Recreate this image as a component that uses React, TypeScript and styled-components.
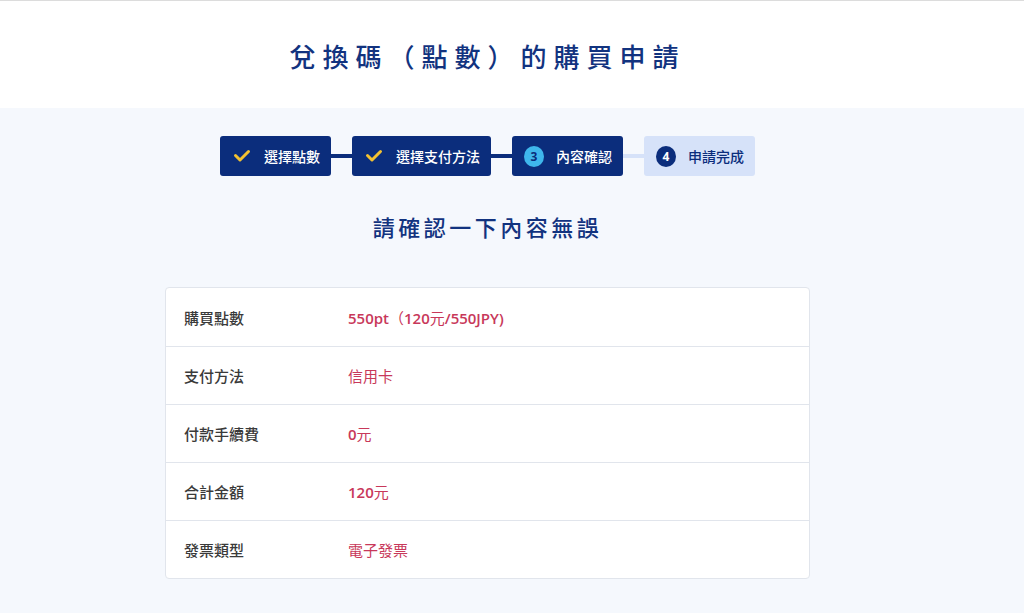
import styled, { createGlobalStyle } from "styled-components";

const GlobalStyle = createGlobalStyle`
  html, body {
    margin: 0;
    padding: 0;
    background: #f5f8fd;
    font-family: "Noto Sans CJK TC", "Noto Sans", sans-serif;
  }
  * { box-sizing: border-box; }
`;

const NAVY = "#0b2d7c";
const PALE = "#d6e2f9";

type StepState = "done" | "current" | "todo";

const steps: { label: string; state: StepState; num: number }[] = [
  { label: "選擇點數", state: "done", num: 1 },
  { label: "選擇支付方法", state: "done", num: 2 },
  { label: "內容確認", state: "current", num: 3 },
  { label: "申請完成", state: "todo", num: 4 },
];

const rows = [
  { label: "購買點數", value: "550pt（120元/550JPY)" },
  { label: "支付方法", value: "信用卡" },
  { label: "付款手續費", value: "0元" },
  { label: "合計金額", value: "120元" },
  { label: "發票類型", value: "電子發票" },
];

const CheckIcon = () => (
  <svg width="20" height="20" viewBox="0 0 20 20">
    <polyline
      points="3.5,9.5 8,14 16.5,5.5"
      fill="none"
      stroke="#f3c131"
      strokeWidth="3"
      strokeLinecap="round"
      strokeLinejoin="round"
    />
  </svg>
);

// latin runs are semibold in the design, han characters stay regular
const renderValue = (text: string) =>
  text
    .split(/([\x20-\x7E]+)/)
    .filter(Boolean)
    .map((part, i) =>
      /^[\x20-\x7E]+$/.test(part) ? <Latin key={i}>{part}</Latin> : <span key={i}>{part}</span>
    );

export default function App() {
  return (
    <>
      <GlobalStyle />
      <Page>
        <Header>
          <Title>兌換碼（點數）的購買申請</Title>
        </Header>
        <Main>
          <Stepper>
            {steps.map((s, i) => (
              <StepGroup key={s.num}>
                {i > 0 && <Connector $active={s.state !== "todo"} />}
                <Step $state={s.state}>
                  <IconBox>
                    {s.state === "done" ? (
                      <CheckIcon />
                    ) : (
                      <NumCircle $state={s.state}>{s.num}</NumCircle>
                    )}
                  </IconBox>
                  {s.label}
                </Step>
              </StepGroup>
            ))}
          </Stepper>

          <SubTitle>請確認一下內容無誤</SubTitle>

          <Table>
            {rows.map((r) => (
              <Row key={r.label}>
                <Label>{r.label}</Label>
                <Value>{renderValue(r.value)}</Value>
              </Row>
            ))}
          </Table>
        </Main>
      </Page>
    </>
  );
}

const Page = styled.div`
  width: 100%;
  min-height: 613px;
  border-top: 1px solid #dcdcdc;
`;

const Header = styled.header`
  background: #fff;
  height: 107px;
  display: flex;
  align-items: center;
  justify-content: center;
  padding-right: 49px;
`;

const Title = styled.h1`
  margin: 0;
  font-size: 26px;
  font-weight: 500;
  letter-spacing: 7px;
  color: #12337f;
  padding-top: 2px;
`;

const Main = styled.main`
  display: flex;
  flex-direction: column;
  align-items: center;
  padding: 28px 49px 32px 0;
`;

const Stepper = styled.div`
  display: flex;
  align-items: center;
`;

const StepGroup = styled.div`
  display: flex;
  align-items: center;
`;

const Connector = styled.div<{ $active: boolean }>`
  width: 21px;
  height: 4px;
  background: ${(p) => (p.$active ? NAVY : PALE)};
`;

const Step = styled.div<{ $state: StepState }>`
  height: 40px;
  display: flex;
  align-items: center;
  gap: 12px;
  padding: 0 11px 0 12px;
  border-radius: 3px;
  font-size: 14px;
  font-weight: 500;
  background: ${(p) => (p.$state === "todo" ? PALE : NAVY)};
  color: ${(p) => (p.$state === "todo" ? NAVY : "#fff")};
`;

const IconBox = styled.span`
  width: 20px;
  height: 20px;
  display: flex;
  align-items: center;
  justify-content: center;
`;

const NumCircle = styled.span<{ $state: StepState }>`
  width: 21px;
  height: 21px;
  border-radius: 50%;
  display: flex;
  align-items: center;
  justify-content: center;
  font-family: "Open Sans", "Noto Sans", sans-serif;
  font-size: 12px;
  font-weight: 700;
  background: ${(p) => (p.$state === "current" ? "#3fb7ec" : NAVY)};
  color: ${(p) => (p.$state === "current" ? NAVY : "#fff")};
`;

const SubTitle = styled.h2`
  margin: 34px 0 0;
  font-size: 22px;
  font-weight: 500;
  letter-spacing: 3.5px;
  color: #12337f;
  line-height: 32px;
`;

const Table = styled.div`
  margin-top: 45px;
  width: 645px;
  background: #fff;
  border: 1px solid #e1e5ec;
  border-radius: 4px;
`;

const Row = styled.div`
  height: 58px;
  display: flex;
  align-items: center;
  & + & {
    border-top: 1px solid #e1e5ec;
  }
`;

const Label = styled.div`
  width: 182px;
  padding-left: 18px;
  font-size: 15px;
  font-weight: 500;
  color: #3a3a3a;
`;

const Value = styled.div`
  font-family: "Noto Sans CJK TC", sans-serif;
  font-size: 15px;
  font-weight: 400;
  color: #c8385a;
`;

const Latin = styled.span`
  font-family: "Open Sans", "Noto Sans", sans-serif;
  font-weight: 600;
`;
